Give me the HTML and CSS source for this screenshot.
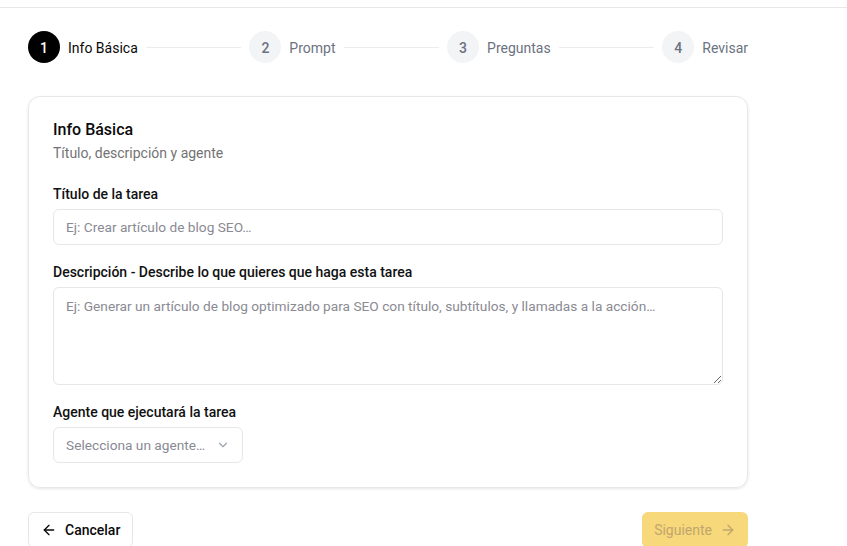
FILE: index.html
```html
<!DOCTYPE html>
<html lang="es">
<head>
    <meta charset="UTF-8">
    <meta name="viewport" content="width=device-width, initial-scale=1.0">
    <title>Nueva tarea</title>
    <link rel="stylesheet" href="styles.css">
</head>
<body>

<div class="topbar"></div>

<div class="page">
    <!-- Stepper -->
    <div class="stepper">
        <div class="step active">
            <span class="step-num">1</span>
            <span class="step-label">Info Básica</span>
        </div>
        <div class="step-line"></div>
        <div class="step">
            <span class="step-num">2</span>
            <span class="step-label">Prompt</span>
        </div>
        <div class="step-line"></div>
        <div class="step">
            <span class="step-num">3</span>
            <span class="step-label">Preguntas</span>
        </div>
        <div class="step-line"></div>
        <div class="step">
            <span class="step-num">4</span>
            <span class="step-label">Revisar</span>
        </div>
    </div>

    <!-- Card -->
    <div class="card">
        <h2 class="card-title">Info Básica</h2>
        <p class="card-sub">Título, descripción y agente</p>

        <div class="field">
            <label for="title">Título de la tarea</label>
            <input type="text" id="title" placeholder="Ej: Crear artículo de blog SEO…">
        </div>

        <div class="field">
            <label for="desc">Descripción - Describe lo que quieres que haga esta tarea</label>
            <textarea id="desc" placeholder="Ej: Generar un artículo de blog optimizado para SEO con título, subtítulos, y llamadas a la acción…"></textarea>
        </div>

        <div class="field">
            <label>Agente que ejecutará la tarea</label>
            <button type="button" class="select">
                <span>Selecciona un agente…</span>
                <svg width="14" height="14" viewBox="0 0 24 24" fill="none" stroke="#9ca3af" stroke-width="2" stroke-linecap="round" stroke-linejoin="round"><path d="m6 9 6 6 6-6"/></svg>
            </button>
        </div>
    </div>

    <div class="actions">
        <button type="button" class="btn btn-outline">
            <svg width="16" height="16" viewBox="0 0 24 24" fill="none" stroke="currentColor" stroke-width="2" stroke-linecap="round" stroke-linejoin="round"><path d="M19 12H5"/><path d="m12 19-7-7 7-7"/></svg>
            Cancelar
        </button>
        <button type="button" class="btn btn-primary" disabled>
            Siguiente
            <svg width="16" height="16" viewBox="0 0 24 24" fill="none" stroke="currentColor" stroke-width="2" stroke-linecap="round" stroke-linejoin="round"><path d="M5 12h14"/><path d="m12 5 7 7-7 7"/></svg>
        </button>
    </div>
</div>

</body>
</html>
```

FILE: styles.css
```css
* {
    box-sizing: border-box;
}
body {
    margin: 0;
    font-family: Roboto, "Noto Sans", sans-serif;
    color: #0a0a0a;
    background-color: #fff;
}
.topbar {
    height: 8px;
    border-bottom: 1px solid #e5e7eb;
}
.page {
    width: 720px;
    margin-left: 28px;
    padding-top: 23px;
}

/* Stepper */
.stepper {
    display: flex;
    align-items: center;
    margin-bottom: 33px;
}
.step {
    display: flex;
    align-items: center;
    gap: 8px;
}
.step-num {
    width: 32px;
    height: 32px;
    border-radius: 50%;
    background-color: #f3f4f6;
    color: #6b7280;
    display: flex;
    align-items: center;
    justify-content: center;
    font-size: 14px;
    font-weight: 500;
    padding-top: 1px;
}
.step-label {
    font-size: 14px;
    color: #6b7280;
    padding-top: 1px;
}
.step.active .step-num {
    background-color: #000;
    color: #fff;
}
.step.active .step-label {
    color: #0a0a0a;
}
.step-line {
    flex: 1;
    height: 1px;
    background-color: #ececee;
    margin: 0 8px;
}

/* Card */
.card {
    border: 1px solid #e5e7eb;
    border-radius: 12px;
    padding: 21px 24px 24px;
    box-shadow: 0 1px 3px rgba(0, 0, 0, 0.1);
}
.card-title {
    margin: 0;
    font-size: 16px;
    line-height: 24px;
    font-weight: 500;
}
.card-sub {
    margin: 1px 0 0;
    font-size: 14px;
    line-height: 20px;
    color: #737373;
}
.field {
    display: flex;
    flex-direction: column;
    gap: 5px;
    margin-top: 16px;
}
.card-sub + .field {
    margin-top: 20px;
}
.field label {
    font-size: 14px;
    line-height: 20px;
    padding-top: 1px;
    font-weight: 500;
    color: #111;
}
input, textarea, .select {
    font-family: Roboto, "Noto Sans", sans-serif;
    font-size: 13.7px;
    border: 1px solid #e5e7eb;
    border-radius: 6px;
    background: #fff;
    color: #0a0a0a;
}
input {
    height: 36px;
    padding: 0 12px;
}
textarea {
    height: 98px;
    padding: 8px 12px;
    line-height: 20px;
    resize: vertical;
}
input::placeholder, textarea::placeholder {
    color: #8a8a93;
}
.select {
    width: 190px;
    height: 36px;
    padding: 0 12px;
    display: flex;
    align-items: center;
    justify-content: space-between;
    color: #8a8a93;
    text-align: left;
}

/* Footer buttons */
.actions {
    display: flex;
    justify-content: space-between;
    margin-top: 24px;
}
.btn {
    height: 36px;
    padding: 0 12px;
    border-radius: 6px;
    display: flex;
    align-items: center;
    gap: 8px;
    font-family: Roboto, "Noto Sans", sans-serif;
    font-size: 14px;
    font-weight: 500;
    cursor: pointer;
}
.btn-outline {
    background: #fff;
    border: 1px solid #e5e7eb;
    color: #0a0a0a;
}
.btn-primary {
    background-color: #f7d87a;
    border: none;
    color: #c2a66e;
    font-weight: 400;
    padding: 0 12px;
}
```
